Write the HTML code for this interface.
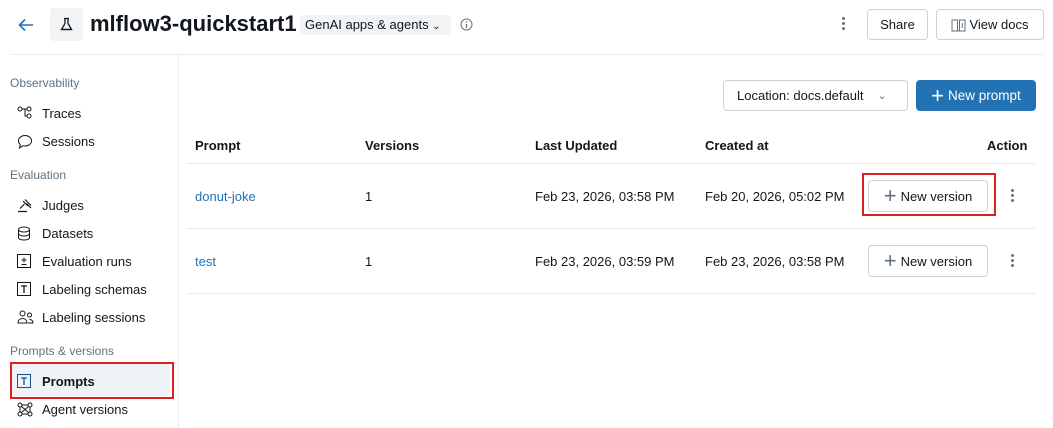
<!DOCTYPE html>
<html><head><style>
*{box-sizing:border-box;margin:0;padding:0}
body{width:1053px;height:428px;overflow:hidden;background:#fff;font-family:"Liberation Sans",sans-serif;font-size:13px;color:#11171c;position:relative}
.a{position:absolute}
.btn{position:absolute;border:1px solid #cbd2d9;border-radius:4px;background:#fff;display:flex;align-items:center;justify-content:center;font-size:13px;color:#11171c}
.sec{position:absolute;left:10px;font-size:12px;color:#5f7281}
.it{position:absolute;left:42px;font-size:13px}
.ic{position:absolute;left:17px}
.th{position:absolute;top:138px;font-weight:bold;font-size:13px}
.hl{position:absolute;left:187px;width:849px;height:1px;background:#e8ecf0}
.dots{position:absolute;width:3px}
.dots i{display:block;width:3px;height:3px;border-radius:50%;background:#5f7281;margin-bottom:2px}
</style></head><body>
<svg class="a" style="left:17px;top:16px" width="18" height="18" viewBox="0 0 18 18"><path d="M16 9H3M8 3.5L2.5 9 8 14.5" stroke="#2272b4" stroke-width="1.6" fill="none"/></svg>
<div class="a" style="left:50px;top:8px;width:33px;height:33px;background:#f1f3f5;border-radius:4px"></div>
<svg class="a" style="left:59px;top:17px" width="15" height="15" viewBox="0 0 15 15"><path d="M5 1.5h5M6 1.5v5L2.5 12.5h10L9 6.5v-5" stroke="#11171c" stroke-width="1.3" fill="none"/><path d="M2.5 12.5h10" stroke="#11171c" stroke-width="1.3"/></svg>
<div class="a" style="left:90px;top:11px;font-size:22px;font-weight:bold">mlflow3-quickstart1</div>
<div class="a" style="left:300px;top:15px;height:20px;width:151px;background:#f1f3f5;border-radius:4px;font-size:13px;padding:2px 5px">GenAI apps &amp; agents <span style="font-size:10px">⌄</span></div>
<svg class="a" style="left:460px;top:18px" width="13" height="13"><circle cx="6.5" cy="6.5" r="5.5" stroke="#5f7281" fill="none"/><path d="M6.5 6v4" stroke="#5f7281" stroke-width="1.3"/><circle cx="6.5" cy="4" r=".8" fill="#5f7281"/></svg>
<div class="dots" style="left:842px;top:17px"><i></i><i></i><i></i></div>
<div class="btn" style="left:867px;top:9px;width:61px;height:31px">Share</div>
<div class="btn" style="left:936px;top:9px;width:108px;height:31px"><svg width="15" height="14" style="margin-right:3px"><path d="M1 2h5.5v11H1zM8.5 2H14v11H8.5zM6.5 13h2" stroke="#5f7281" fill="none"/><path d="M11.2 5v5" stroke="#5f7281"/></svg>View docs</div>
<div class="a" style="left:10px;top:54px;width:1033px;height:1px;background:#e8ecf0"></div>
<div class="a" style="left:178px;top:55px;width:1px;height:373px;background:#e8ecf0"></div>
<div class="sec" style="top:76px">Observability</div>
<svg class="ic" style="top:106px" width="16" height="14"><circle cx="3" cy="3" r="2" stroke="#11171c" fill="none"/><circle cx="12" cy="3" r="2" stroke="#11171c" fill="none"/><circle cx="12" cy="10" r="2" stroke="#11171c" fill="none"/><path d="M5 3h5M8 3v7h2" stroke="#11171c" fill="none"/></svg><div class="it" style="top:106px">Traces</div>
<svg class="ic" style="top:134px" width="16" height="16"><path d="M8 1.5c3.6 0 6.5 2.3 6.5 5.3S11.6 12 8 12c-.8 0-1.5-.1-2.2-.3L2.5 14l.8-3.4C2.2 9.6 1.5 8.3 1.5 6.8 1.5 3.8 4.4 1.5 8 1.5z" stroke="#11171c" fill="none"/></svg><div class="it" style="top:134px">Sessions</div>
<div class="sec" style="top:168px">Evaluation</div>
<svg class="ic" style="top:198px" width="16" height="15"><path d="M1 13.5h9M3 10.5l4.5-4.5M6 3l5 5M8 1.5l6 6M9.5 5.5L14 10" stroke="#11171c" stroke-width="1.2" fill="none"/></svg><div class="it" style="top:198px">Judges</div>
<svg class="ic" style="top:226px" width="14" height="15"><ellipse cx="7" cy="3.5" rx="5.5" ry="2.5" stroke="#11171c" fill="none"/><path d="M1.5 3.5v8c0 1.4 2.5 2.5 5.5 2.5s5.5-1.1 5.5-2.5v-8M1.5 7.5c0 1.4 2.5 2.5 5.5 2.5s5.5-1.1 5.5-2.5" stroke="#11171c" fill="none"/></svg><div class="it" style="top:226px">Datasets</div>
<svg class="ic" style="top:254px" width="14" height="14"><rect x=".5" y=".5" width="13" height="13" stroke="#11171c" fill="none"/><path d="M7 3.5v5M4.5 6h5M4.5 10.5h5" stroke="#11171c"/></svg><div class="it" style="top:254px">Evaluation runs</div>
<svg class="ic" style="top:282px" width="14" height="14"><rect x=".5" y=".5" width="13" height="13" stroke="#11171c" fill="none"/><path d="M4 4h6M7 4v7" stroke="#11171c" stroke-width="1.3"/></svg><div class="it" style="top:282px">Labeling schemas</div>
<svg class="ic" style="top:310px" width="17" height="14"><circle cx="5.5" cy="3.5" r="2.5" stroke="#11171c" fill="none"/><circle cx="12.5" cy="5" r="2" stroke="#11171c" fill="none"/><path d="M1 13c0-3 2-4.5 4.5-4.5S10 10 10 13zM11 13h5c0-2-1.2-3.5-3.5-3.5" stroke="#11171c" fill="none"/></svg><div class="it" style="top:310px">Labeling sessions</div>
<div class="sec" style="top:344px">Prompts &amp; versions</div>
<div class="a" style="left:10px;top:362px;width:164px;height:37px;border:2px solid #e02020;"></div>
<div class="a" style="left:12px;top:364px;width:158px;height:32px;background:#eff3f7;border-radius:3px"></div>
<svg class="ic" style="top:374px" width="14" height="14"><rect x=".5" y=".5" width="13" height="13" stroke="#0e538b" fill="none"/><path d="M4 4h6M7 4v7" stroke="#0e538b" stroke-width="1.3"/></svg><div class="it" style="top:374px;font-weight:bold">Prompts</div>
<svg class="ic" style="top:402px" width="16" height="15"><circle cx="3" cy="3" r="2" stroke="#11171c" fill="none"/><circle cx="13" cy="3" r="2" stroke="#11171c" fill="none"/><circle cx="3" cy="12" r="2" stroke="#11171c" fill="none"/><circle cx="13" cy="12" r="2" stroke="#11171c" fill="none"/><path d="M5 3h6M3 5v5M5 12h6M13 5v5M4.5 4.5l7 6M11.5 4.5l-7 6" stroke="#11171c" fill="none"/></svg><div class="it" style="top:402px">Agent versions</div>
<div class="btn" style="left:723px;top:80px;width:185px;height:31px;justify-content:flex-start;padding-left:13px">Location: docs.default<span style="margin-left:14px;color:#5f7281;font-size:11px">⌄</span></div>
<div class="btn" style="left:916px;top:80px;width:120px;height:31px;background:#2272b4;border-color:#2272b4;color:#fff;font-size:13.5px"><span style="font-size:22px;margin-right:4px;line-height:1;font-weight:300">+</span>New prompt</div>
<div class="th" style="left:195px">Prompt</div>
<div class="th" style="left:365px">Versions</div>
<div class="th" style="left:535px">Last Updated</div>
<div class="th" style="left:705px">Created at</div>
<div class="th" style="left:987px">Action</div>
<div class="hl" style="top:163px"></div>
<div class="hl" style="top:228px"></div>
<div class="hl" style="top:293px"></div>
<div class="a" style="left:195px;top:189px;color:#2272b4">donut-joke</div>
<div class="a" style="left:365px;top:189px">1</div>
<div class="a" style="left:535px;top:189px">Feb 23, 2026, 03:58 PM</div>
<div class="a" style="left:705px;top:189px">Feb 20, 2026, 05:02 PM</div>
<div class="a" style="left:862px;top:173px;width:134px;height:43px;border:2px solid #e02020"></div>
<div class="btn" style="left:868px;top:180px;width:120px;height:32px"><span style="font-size:22px;color:#5f7281;margin-right:4px;font-weight:300;line-height:1">+</span>New version</div>
<div class="dots" style="left:1011px;top:189px"><i></i><i></i><i></i></div>
<div class="a" style="left:195px;top:254px;color:#2272b4">test</div>
<div class="a" style="left:365px;top:254px">1</div>
<div class="a" style="left:535px;top:254px">Feb 23, 2026, 03:59 PM</div>
<div class="a" style="left:705px;top:254px">Feb 23, 2026, 03:58 PM</div>
<div class="btn" style="left:868px;top:245px;width:120px;height:32px"><span style="font-size:22px;color:#5f7281;margin-right:4px;font-weight:300;line-height:1">+</span>New version</div>
<div class="dots" style="left:1011px;top:254px"><i></i><i></i><i></i></div>
</body></html>
